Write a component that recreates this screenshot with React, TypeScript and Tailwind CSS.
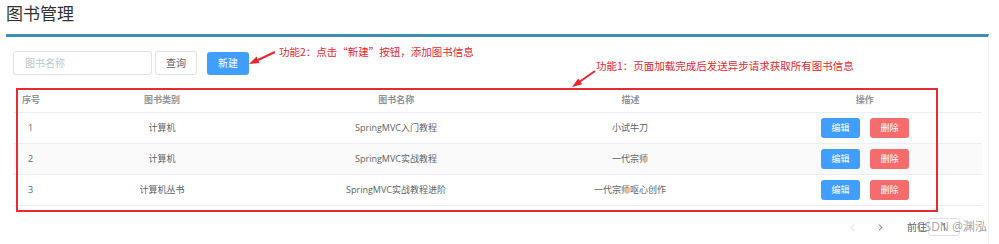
import React from "react";
import { ChevronLeft, ChevronRight } from "lucide-react";

const books = [
  { id: 1, type: "计算机", name: "SpringMVC入门教程", desc: "小试牛刀" },
  { id: 2, type: "计算机", name: "SpringMVC实战教程", desc: "一代宗师" },
  { id: 3, type: "计算机丛书", name: "SpringMVC实战教程进阶", desc: "一代宗师呕心创作" },
];

export default function App() {
  return (
    <div className="relative w-[999px] h-[244px] bg-white overflow-hidden font-['Open_Sans','Noto_Sans_CJK_SC',sans-serif]">
      <h1 className="pl-[6px] pt-[2px] h-[34px] text-[17px] leading-[24px] text-[#333]">图书管理</h1>

      <div className="ml-[6px] w-[983px] h-[210px] border-t-[3px] border-t-[#3c8dbc] border-r border-r-[#f2f2f2]">
        <div className="pl-[7px] pt-[14px] flex items-center">
          <div className="w-[139px] h-[24px] border border-[#dcdfe6] rounded-[3px] pl-[11px] flex items-center text-[10px] text-[#c0c4cc]">
            图书名称
          </div>
          <button className="ml-[3px] w-[42px] h-[24px] border border-[#dcdfe6] rounded-[3px] bg-white text-[10px] text-[#606266]">
            查询
          </button>
          <button className="ml-[10px] w-[42px] h-[23px] rounded-[3px] bg-[#409eff] text-[10px] text-white">
            新建
          </button>
        </div>

        <div className="mt-[13px] ml-[7px] w-[969px] text-[9px]">
          <div className="flex h-[25px] items-center border-b border-[#ebeef5] font-bold text-[#909399]">
            <div className="w-[32px] pl-[9px] whitespace-nowrap">序号</div>
            <div className="flex-1 text-center">图书类别</div>
            <div className="flex-1 text-center">图书名称</div>
            <div className="flex-1 text-center">描述</div>
            <div className="flex-1 text-center">操作</div>
          </div>
          {books.map((b, i) => (
            <div
              key={b.id}
              className={`flex h-[31px] items-center border-b border-[#ebeef5] text-[#606266] ${i === 1 ? "bg-[#fafafa]" : ""}`}
            >
              <div className="w-[32px] pl-[15px]">{b.id}</div>
              <div className="flex-1 text-center">{b.type}</div>
              <div className="flex-1 text-center">{b.name}</div>
              <div className="flex-1 text-center">{b.desc}</div>
              <div className="flex-1 flex justify-center gap-[10px] pl-[1px]">
                <button className="w-[39px] h-[20px] rounded-[3px] bg-[#409eff] text-white text-[9px]">编辑</button>
                <button className="w-[39px] h-[20px] rounded-[3px] bg-[#f56c6c] text-white text-[9px]">删除</button>
              </div>
            </div>
          ))}

          <div className="mt-[12px] h-[18px] flex items-center text-[10px]">
            <span className="ml-[831px] w-[16px] flex justify-center text-[#c0c4cc]">
              <ChevronLeft size={11} strokeWidth={1.6} />
            </span>
            <span className="ml-[12px] w-[16px] flex justify-center text-[#303133]">
              <ChevronRight size={11} strokeWidth={1.6} />
            </span>
            <span className="ml-[19px] text-[#606266]">前往</span>
            <div className="ml-[1px] w-[32px] h-[18px] border border-[#dcdfe6] rounded-[3px] flex items-center justify-center text-[#606266]">
              1
            </div>
          </div>
        </div>
      </div>

      {/* annotations */}
      <div className="absolute left-[16px] top-[88px] w-[922px] h-[124px] border-2 border-[#ea2a33]" />
      <div className="absolute left-[279px] top-[45px] text-[10.5px] leading-[14px] text-[#e8262f] font-['Noto_Sans_CJK_SC',sans-serif]">
        功能2：点击“新建”按钮，添加图书信息
      </div>
      <div className="absolute left-[596px] top-[59px] text-[10.5px] leading-[14px] text-[#e8262f] font-['Noto_Sans_CJK_SC',sans-serif]">
        功能1：页面加载完成后发送异步请求获取所有图书信息
      </div>
      <svg className="absolute inset-0 pointer-events-none" width="999" height="244">
        <line x1="275" y1="52" x2="258" y2="60" stroke="#e8262f" strokeWidth="2" />
        <polygon points="249,64 259.5,63 256.6,56.6" fill="#e8262f" />
        <line x1="595" y1="71" x2="580" y2="81.5" stroke="#e8262f" strokeWidth="2" />
        <polygon points="572,87 582.2,84.2 578.2,78.4" fill="#e8262f" />
      </svg>
      <div className="absolute left-[917px] top-[219px] text-[12px] leading-[16px] text-[#8a8a8a]/80">
        CSDN @渊泓
      </div>
    </div>
  );
}
